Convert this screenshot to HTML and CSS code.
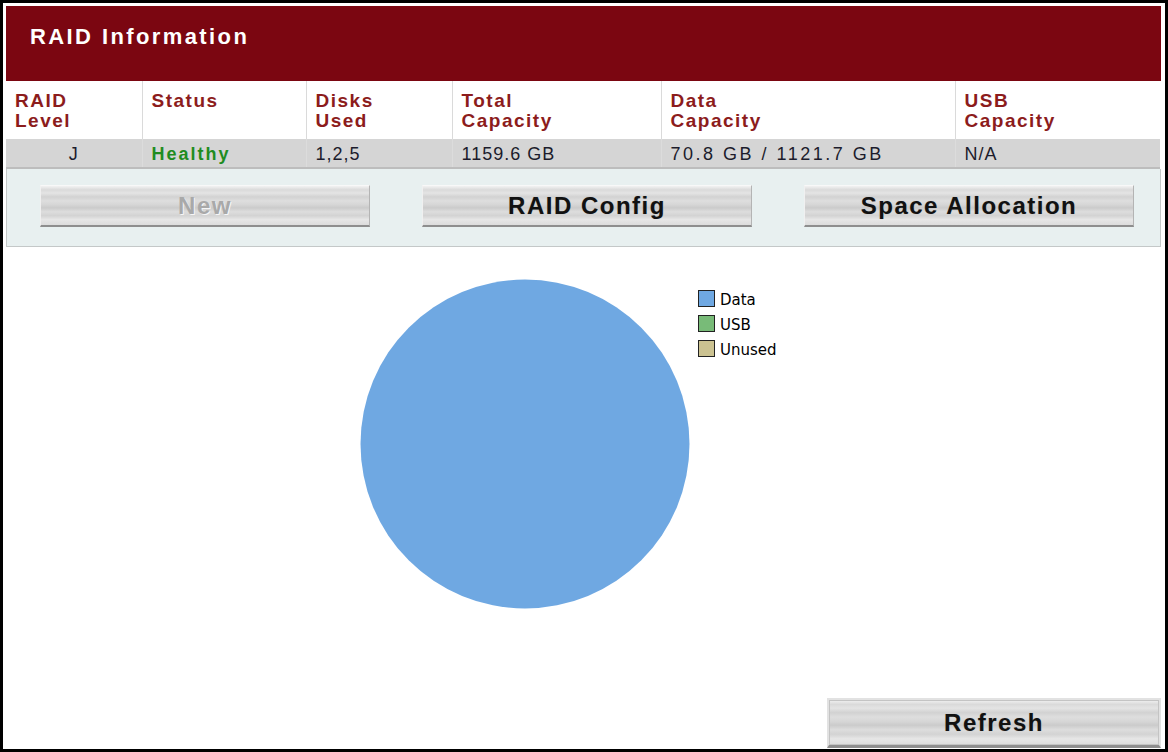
FILE: index.html
```html
<!DOCTYPE html>
<html>
<head>
<meta charset="utf-8">
<title>RAID Information</title>
<link rel="stylesheet" href="styles.css">
</head>
<body>
<div class="frame">
  <div class="title-bar">RAID Information</div>
  <table class="raid-table">
    <colgroup>
      <col class="c1"><col class="c2"><col class="c3"><col class="c4"><col class="c5"><col class="c6">
    </colgroup>
    <thead>
      <tr>
        <th>RAID<br>Level</th>
        <th>Status</th>
        <th>Disks<br>Used</th>
        <th>Total<br>Capacity</th>
        <th>Data<br>Capacity</th>
        <th>USB<br>Capacity</th>
      </tr>
    </thead>
    <tbody>
      <tr>
        <td class="center">J</td>
        <td class="healthy">Healthy</td>
        <td>1,2,5</td>
        <td>1159.6 GB</td>
        <td class="wide">70.8 GB / 1121.7 GB</td>
        <td>N/A</td>
      </tr>
    </tbody>
  </table>
  <div class="button-panel">
    <button class="metal-btn disabled" type="button">New</button>
    <button class="metal-btn" type="button">RAID Config</button>
    <button class="metal-btn" type="button">Space Allocation</button>
  </div>
  <div class="main-area">
    <div class="chart-area">
      <svg class="chart" width="460" height="360" viewBox="0 0 460 360">
        <circle cx="171" cy="178" r="164.5" fill="#6fa8e2"/>
        <rect x="344.5" y="24.5" width="16" height="16" fill="#6fa8e2" stroke="#222" stroke-width="1"/>
        <rect x="344.5" y="49.5" width="16" height="16" fill="#78bb78" stroke="#222" stroke-width="1"/>
        <rect x="344.5" y="74.5" width="16" height="16" fill="#cbc291" stroke="#222" stroke-width="1"/>
        <text x="366" y="39" class="legend-text">Data</text>
        <text x="366" y="64" class="legend-text">USB</text>
        <text x="366" y="89" class="legend-text">Unused</text>
      </svg>
    </div>
    <div class="refresh-row">
      <button class="metal-btn refresh" type="button">Refresh</button>
    </div>
  </div>
</div>
</body>
</html>
```

FILE: styles.css
```css
* { box-sizing: border-box; }

html, body {
  margin: 0;
  padding: 0;
  background: #ffffff;
}

.frame {
  width: 1168px;
  height: 752px;
  border: 3px solid #000;
  padding: 3px 4px 0 3px;
  display: flex;
  flex-direction: column;
  font-family: "Liberation Sans", Arial, sans-serif;
  background: #fff;
}

.title-bar {
  height: 75px;
  flex: none;
  background: #7b0611;
  color: #fff;
  font-weight: bold;
  font-size: 22px;
  letter-spacing: 2.4px;
  padding: 18px 0 0 24px;
}

.raid-table {
  width: 1154px;
  border-collapse: collapse;
  table-layout: fixed;
  flex: none;
}

.c1 { width: 136px; }
.c2 { width: 164px; }
.c3 { width: 146px; }
.c4 { width: 209px; }
.c5 { width: 294px; }
.c6 { width: 205px; }

.raid-table th {
  text-align: left;
  vertical-align: top;
  color: #8c1c1c;
  font-size: 19px;
  line-height: 20px;
  letter-spacing: 1.5px;
  font-weight: bold;
  padding: 10px 0 8px 9px;
  height: 58px;
  border-left: 1px solid #dadada;
  background: #fff;
}

.raid-table th:first-child { border-left: none; }

.raid-table td {
  background: #d5d5d5;
  color: #1c1c2c;
  font-size: 18px;
  letter-spacing: 1px;
  line-height: 20px;
  height: 29px;
  padding: 4px 0 3px 9px;
  border-left: 1px solid #dcdcdc;
  border-bottom: 2px solid #bdbdbd;
}

.raid-table td:first-child { border-left: none; }

.raid-table td.center {
  text-align: center;
  padding-left: 0;
}

.raid-table td.healthy {
  color: #1f8c1f;
  font-weight: bold;
  letter-spacing: 2px;
}

.raid-table td.wide {
  letter-spacing: 2.5px;
}

.button-panel {
  flex: none;
  height: 78px;
  background: #e8f0f0;
  border: 1px solid #c4c8c8;
  border-top: none;
  display: flex;
  align-items: flex-start;
  gap: 52px;
  padding: 16px 0 0 33px;
}

.metal-btn {
  width: 330px;
  height: 42px;
  border: none;
  border-top: 1px solid #f8f8f8;
  border-left: 1px solid #f0f0f0;
  border-right: 1px solid #b4b4b4;
  border-bottom: 2px solid #8e8e8e;
  background: linear-gradient(to bottom,
    #f2f2f2 0%, #dadada 10%, #e4e4e4 18%, #d2d2d2 28%,
    #dedede 38%, #d6d6d6 48%, #cbcbcb 56%, #dddddd 66%,
    #d3d3d3 76%, #e6e6e6 86%, #dcdcdc 100%);
  font-family: "Liberation Sans", Arial, sans-serif;
  font-weight: bold;
  font-size: 24px;
  letter-spacing: 1.5px;
  color: #111;
  padding: 0;
  text-shadow: 0 0 1px rgba(0, 0, 0, 0.2);
  cursor: pointer;
}

.metal-btn.disabled {
  color: #a9a9a9;
  text-shadow: 1px 1px 0 #f6f6f6;
}

.main-area {
  flex: 1;
  display: flex;
  flex-direction: column;
  background: #fff;
}

.chart-area {
  flex: 1;
  display: flex;
  justify-content: center;
  padding-top: 19px;
}

.chart { display: block; }

.legend-text {
  font-family: "DejaVu Sans", sans-serif;
  font-size: 15px;
  fill: #000;
}

.refresh-row {
  flex: none;
  display: flex;
  justify-content: flex-end;
  padding-bottom: 1px;
}

.metal-btn.refresh {
  width: 334px;
  height: 50px;
  border: 2px solid #e2e2e2;
  border-bottom: 3px solid #8e8e8e;
  box-shadow: inset 0 0 0 1px #c4c4c4;
}
```
